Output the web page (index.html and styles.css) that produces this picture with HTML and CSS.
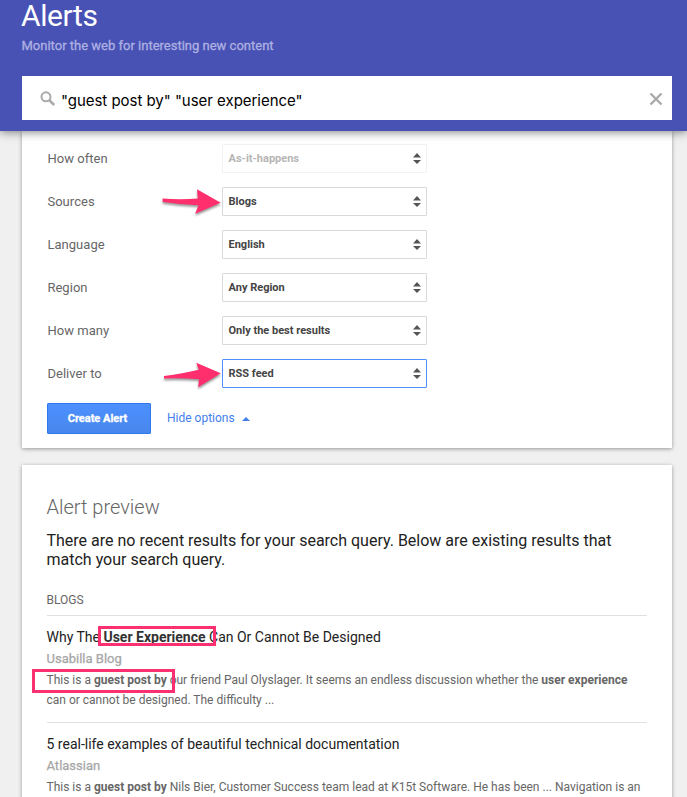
FILE: index.html
```html
<!DOCTYPE html>
<html lang="en">
<head>
<meta charset="utf-8">
<title>Alerts</title>
<link rel="stylesheet" href="styles.css">
</head>
<body>
<header class="header">
  <h1 class="title">Alerts</h1>
  <p class="subtitle">Monitor the web for interesting new content</p>
  <div class="search">
    <svg class="search-icon" width="16" height="16" viewBox="0 0 16 16"><circle cx="6" cy="5.800" r="4.500" fill="none" stroke="#aaa" stroke-width="2"/><path d="M9.200 9l5 5" stroke="#aaa" stroke-width="2.500"/></svg>
    <span class="query">"guest post by" "user experience"</span>
    <svg class="clear" width="14" height="14" viewBox="0 0 14 14"><path d="M1.500 1.500l11 11M12.500 1.500l-11 11" stroke="#a8a8a8" stroke-width="2.300"/></svg>
  </div>
</header>
<main class="content">
  <section class="card options">
    <div class="row"><span class="label">How often</span><div class="select disabled"><span>As-it-happens</span><i class="spin"></i></div></div>
    <div class="row"><span class="label">Sources</span><div class="select"><span>Blogs</span><i class="spin"></i>
      <svg class="arrow" width="64" height="34" viewBox="160 185 64 34"><path d="M162.500 198.500Q180 200 197.800 198.500L197 189.300L220.700 202.700L195.200 213.800L198.500 205.300Q180 204.500 162.700 202Z"/></svg></div></div>
    <div class="row"><span class="label">Language</span><div class="select"><span>English</span><i class="spin"></i></div></div>
    <div class="row"><span class="label">Region</span><div class="select"><span>Any Region</span><i class="spin"></i></div></div>
    <div class="row"><span class="label">How many</span><div class="select"><span>Only the best results</span><i class="spin"></i></div></div>
    <div class="row"><span class="label">Deliver to</span><div class="select focused"><span>RSS feed</span><i class="spin"></i>
      <svg class="arrow" width="64" height="34" viewBox="160 357 64 34"><path d="M164 376Q183 373.500 198.800 369.700L196.200 362.700L220.800 373.300L198.200 387.200L199 379.300Q182 377.800 164 378.500Z"/></svg></div></div>
    <div class="actions"><button class="create">Create Alert</button><a class="hide">Hide options</a><i class="up"></i></div>
  </section>
  <section class="card preview">
    <h2 class="heading">Alert preview</h2>
    <p class="notice">There are no recent results for your search query. Below are existing results that<br>match your search query.</p>
    <h3 class="group">BLOGS</h3>
    <article class="result">
      <h4 class="name">Why The <b class="mark">User Experience<i class="box box-title"></i></b> Can Or Cannot Be Designed</h4>
      <p class="source">Usabilla Blog</p>
      <p class="snippet"><span class="mark">This is a <b>guest post by</b><i class="box box-text"></i></span> our friend Paul Olyslager. It seems an endless discussion whether the <b>user experience</b><br>can or cannot be designed. The difficulty ...</p>
    </article>
    <article class="result">
      <h4 class="name">5 real-life examples of beautiful technical documentation</h4>
      <p class="source">Atlassian</p>
      <p class="snippet">This is a <b>guest post by</b> Nils Bier, Customer Success team lead at K15t Software. He has been ... Navigation is an</p>
    </article>
  </section>
</main>
</body>
</html>
```
FILE: styles.css
```css
* { box-sizing: border-box; }
html, body { height: 797px; overflow: hidden; }
body { margin: 0; background: #f0f0f0; font-family: Roboto, sans-serif; color: #333; }
h1, h2, h3, h4, p { margin: 0; font-weight: 400; white-space: nowrap; }
.header { position: relative; z-index: 1; height: 131px; padding: 0 15px 0 22px; background: #4852b4; box-shadow: 0 1px 9px rgba(0,0,0,.5); }
.title { height: 36px; line-height: 31px; font-size: 30px; letter-spacing: -.4px; text-indent: -1px; color: #fff; }
.subtitle { height: 40px; line-height: 19px; font-size: 13px; text-indent: -.5px; color: #adb0e2; -webkit-text-stroke: .3px #adb0e2; }
.search { display: flex; align-items: center; height: 44px; padding: 0 9px 0 18px; background: #fff; }
.search-icon { margin: 2px 5px 0 0; }
.query { font: 15px/20px Inter, sans-serif; letter-spacing: -.03px; color: #000; padding-top: 6px; }
.clear { margin-left: auto; margin-top: 2px; }
.card { margin-left: 22px; width: 650px; background: #fff; box-shadow: 0 1px 4px rgba(0,0,0,.37); }
.options { height: 317px; padding: 13px 25px 0; }
.row { display: flex; align-items: center; height: 29px; margin-bottom: 14px; }
.label { width: 175px; padding-left: .4px; font-size: 13px; letter-spacing: .04px; color: #666; }
.select { position: relative; display: flex; align-items: center; justify-content: space-between; width: 205px; height: 29px; padding: 0 5px 0 5.5px; border: 1px solid #d9d9d9; border-radius: 1px; font-size: 11px; font-weight: 700; color: #444; }
.disabled { border-color: #f2f2f2; color: #b5b5b5; }
.focused { border-color: #4d90fe; }
.spin { width: 8px; height: 11px; background: linear-gradient(#555, #555); clip-path: polygon(50% 0, 100% 40%, 0 40%, 0 64%, 100% 64%, 50% 100%, 0 64%, 0 40%); }
.arrow { position: absolute; left: -63px; top: -3px; fill: #ff2e6d; filter: drop-shadow(0 2px 1px rgba(0,0,0,.4)); }
.actions { display: flex; align-items: center; height: 31px; margin-top: 15px; }
.create { width: 104px; height: 31px; padding: 0 3px 0 0; border: 1px solid #3079ed; border-radius: 1px; background: linear-gradient(#4d90fe, #4787ed); color: #fff; font: 700 11px Roboto, sans-serif; -webkit-text-stroke: .3px #fff; }
.hide { margin: -1px 0 0 16px; font-size: 12px; color: #427fed; }
.up { margin-left: 7.5px; border: 4px solid transparent; border-top: 0; border-bottom-color: #427fed; }
.preview { height: 360px; margin-top: 17px; padding: 29px 25px 0; }
.heading { height: 37px; line-height: 26px; font-size: 20px; font-weight: 300; text-indent: -.5px; color: #666; }
.notice { height: 58px; margin-left: -.5px; font-size: 16px; line-height: 19px; color: #222; }
.group { height: 27px; font-size: 12px; line-height: 22px; text-indent: -.5px; color: #666; border-bottom: 1px solid #e0e0e0; }
.result { height: 107px; padding-top: 11px; border-bottom: 1px solid #e0e0e0; }
.name { height: 21px; margin-left: -.5px; line-height: 20px; font-size: 14px; color: #222; }
.name b { color: #333; }
.source { margin-left: -.5px; line-height: 22px; font-size: 13px; color: #a5a5a5; -webkit-text-stroke: .25px #a5a5a5; }
.snippet { margin-left: -.5px; line-height: 20px; font-size: 12px; color: #666; }
.mark { position: relative; }
.box { position: absolute; border: 3px solid #fb3070; }
.box-title { left: -5px; top: -3px; width: 118px; height: 20px; }
.box-text { left: -14.5px; top: -4px; width: 143px; height: 24px; }
/* the last row's own gap is replaced by the actions margin */
.row:nth-child(6) { margin-bottom: 0; }
```
